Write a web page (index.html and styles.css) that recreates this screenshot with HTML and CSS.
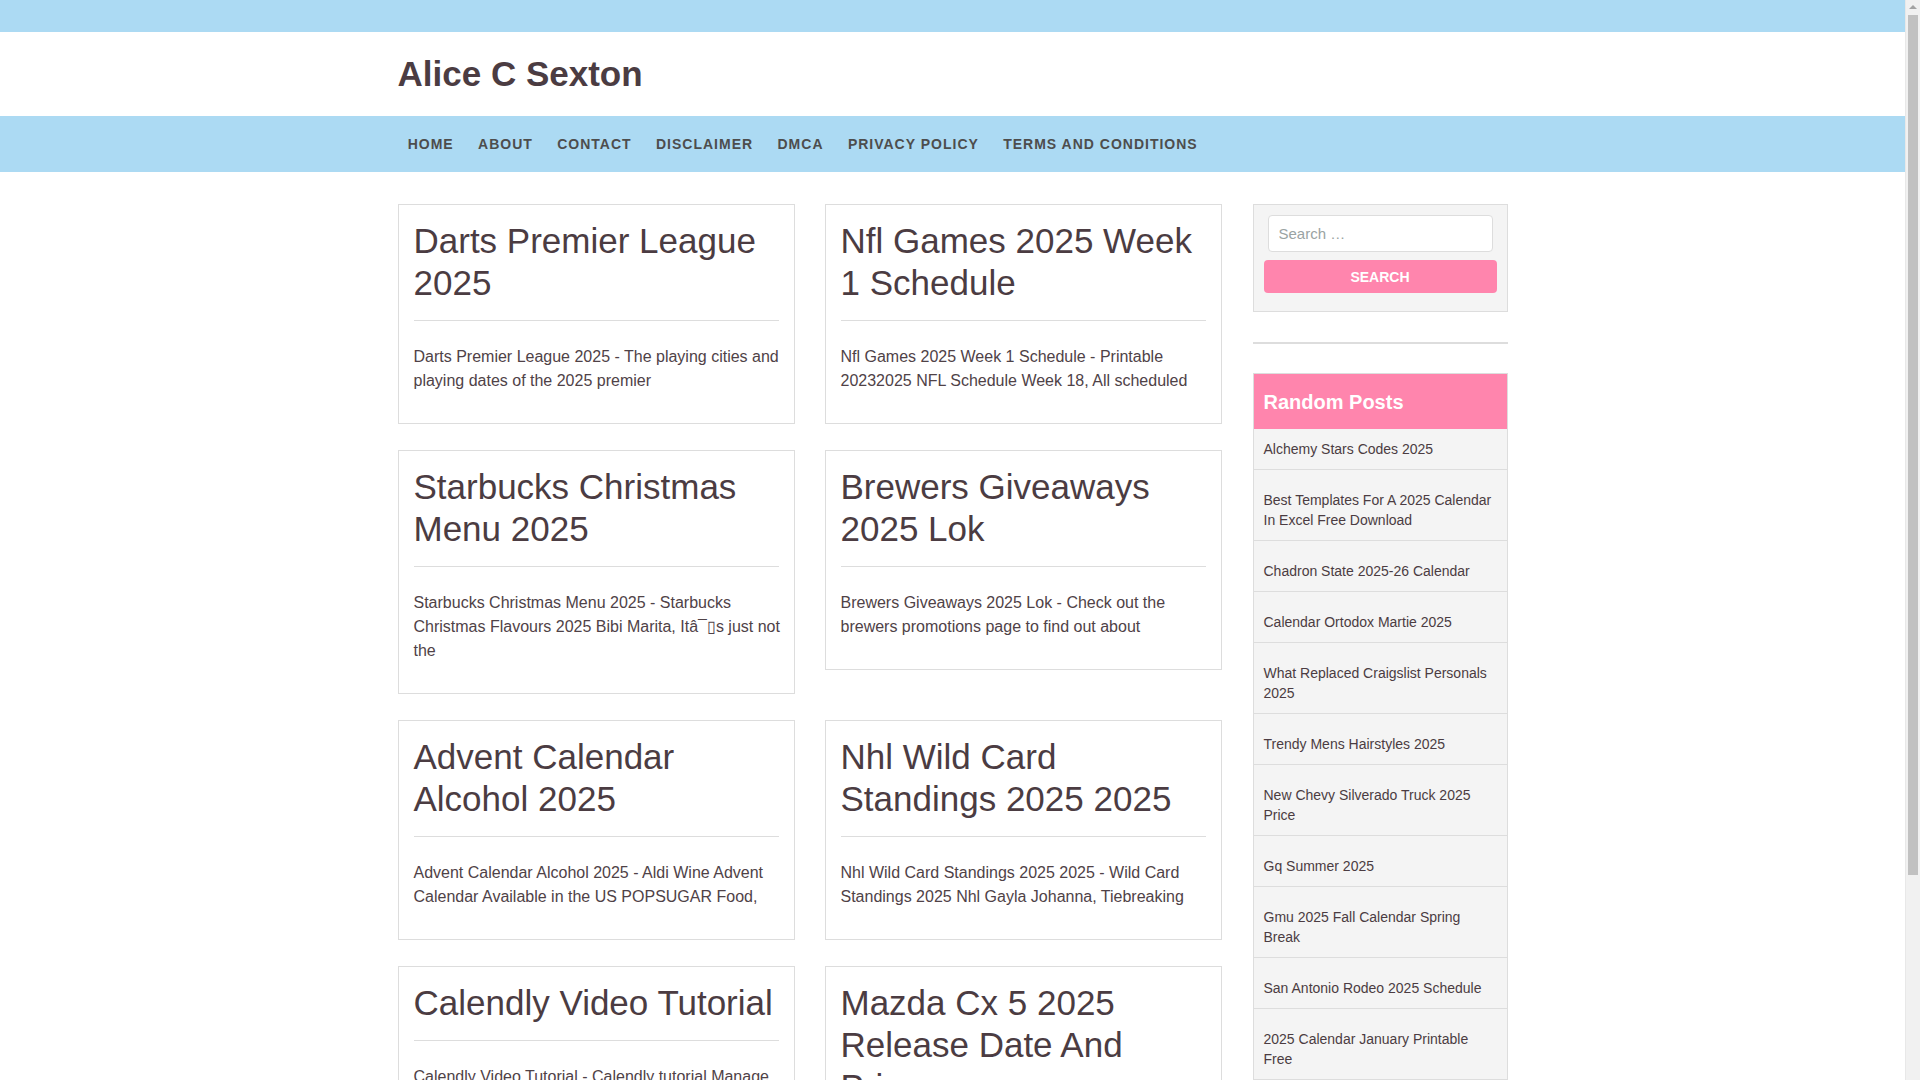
FILE: index.html
```html
<!DOCTYPE html>
<html lang="en">
<head>
<meta charset="utf-8">
<title>Alice C Sexton</title>
<link rel="stylesheet" href="styles.css">
</head>
<body>
<div class="topbar"></div>
<header class="site-header">
  <div class="container">
    <h1 class="site-title">Alice C Sexton</h1>
  </div>
</header>
<nav class="main-nav">
  <div class="container">
    <ul class="menu">
      <li><a href="#">Home</a></li>
      <li><a href="#">About</a></li>
      <li><a href="#">Contact</a></li>
      <li><a href="#">Disclaimer</a></li>
      <li><a href="#">DMCA</a></li>
      <li><a href="#">Privacy Policy</a></li>
      <li><a href="#">Terms and Conditions</a></li>
    </ul>
  </div>
</nav>

<div class="container content">
  <main class="posts">
    <article class="card">
      <header class="card-head"><h2 class="card-title">Darts Premier League 2025</h2></header>
      <p class="card-text">Darts Premier League 2025 - The playing cities and playing dates of the 2025 premier</p>
    </article>
    <article class="card">
      <header class="card-head"><h2 class="card-title">Nfl Games 2025 Week 1 Schedule</h2></header>
      <p class="card-text">Nfl Games 2025 Week 1 Schedule - Printable 20232025 NFL Schedule Week 18, All scheduled</p>
    </article>
    <article class="card">
      <header class="card-head"><h2 class="card-title">Starbucks Christmas Menu 2025</h2></header>
      <p class="card-text">Starbucks Christmas Menu 2025 - Starbucks Christmas Flavours 2025 Bibi Marita, Itâ¯▯s just not the</p>
    </article>
    <article class="card">
      <header class="card-head"><h2 class="card-title">Brewers Giveaways 2025 Lok</h2></header>
      <p class="card-text">Brewers Giveaways 2025 Lok - Check out the brewers promotions page to find out about</p>
    </article>
    <article class="card">
      <header class="card-head"><h2 class="card-title">Advent Calendar Alcohol 2025</h2></header>
      <p class="card-text">Advent Calendar Alcohol 2025 - Aldi Wine Advent Calendar Available in the US POPSUGAR Food,</p>
    </article>
    <article class="card">
      <header class="card-head"><h2 class="card-title">Nhl Wild Card Standings 2025 2025</h2></header>
      <p class="card-text">Nhl Wild Card Standings 2025 2025 - Wild Card Standings 2025 Nhl Gayla Johanna, Tiebreaking</p>
    </article>
    <article class="card">
      <header class="card-head"><h2 class="card-title">Calendly Video Tutorial</h2></header>
      <p class="card-text">Calendly Video Tutorial - Calendly tutorial Manage your meetings and scheduling with ease</p>
    </article>
    <article class="card">
      <header class="card-head"><h2 class="card-title">Mazda Cx 5 2025 Release Date And Price</h2></header>
      <p class="card-text">Mazda Cx 5 2025 Release Date And Price - The new model brings updated styling and</p>
    </article>
  </main>

  <aside class="sidebar">
    <section class="widget search-widget">
      <form class="search-form">
        <input class="search-field" type="search" placeholder="Search …">
        <button class="search-submit" type="button">SEARCH</button>
      </form>
    </section>
    <div class="sidebar-sep"></div>
    <section class="widget random-posts">
      <h3 class="widget-title">Random Posts</h3>
      <ul class="post-list">
        <li><a href="#">Alchemy Stars Codes 2025</a></li>
        <li><a href="#">Best Templates For A 2025 Calendar In Excel Free Download</a></li>
        <li><a href="#">Chadron State 2025-26 Calendar</a></li>
        <li><a href="#">Calendar Ortodox Martie 2025</a></li>
        <li><a href="#">What Replaced Craigslist Personals 2025</a></li>
        <li><a href="#">Trendy Mens Hairstyles 2025</a></li>
        <li><a href="#">New Chevy Silverado Truck 2025 Price</a></li>
        <li><a href="#">Gq Summer 2025</a></li>
        <li><a href="#">Gmu 2025 Fall Calendar Spring Break</a></li>
        <li><a href="#">San Antonio Rodeo 2025 Schedule</a></li>
        <li><a href="#">2025 Calendar January Printable Free</a></li>
      </ul>
    </section>
  </aside>
</div>

<div class="scrollbar" aria-hidden="true">
  <div class="scroll-arrow scroll-up"></div>
  <div class="scroll-thumb"></div>
</div>
</body>
</html>
```

FILE: styles.css
```css
* {
  box-sizing: border-box;
}

html, body {
  margin: 0;
  padding: 0;
}

body {
  margin-right: 15px;
  font-family: "Liberation Sans", Arial, sans-serif;
  color: #4b3c42;
  background: #ffffff;
  font-size: 16px;
  line-height: 1.5;
}

a {
  color: inherit;
  text-decoration: none;
}

.container {
  width: 1110px;
  margin: 0 auto;
}

.topbar {
  height: 32px;
  background: #acdaf3;
}

.site-header {
  height: 84px;
  background: #ffffff;
}

.site-header .container {
  height: 100%;
  display: flex;
  align-items: center;
}

.site-title {
  margin: 0;
  font-size: 35px;
  line-height: 42px;
  font-weight: bold;
  color: #4b3c42;
}

.main-nav {
  height: 56px;
  background: #acdaf3;
}

.menu {
  list-style: none;
  margin: 0 0 0 -2px;
  padding: 0;
  height: 56px;
  display: flex;
  align-items: center;
}

.menu a {
  display: block;
  padding: 0 12.2px;
  font-size: 14px;
  font-weight: bold;
  letter-spacing: 1px;
  text-transform: uppercase;
  color: #4d4d4d;
  line-height: 56px;
}

.content {
  margin-top: 32px;
  display: grid;
  grid-template-columns: 824px 255px;
  column-gap: 31px;
  align-items: start;
}

.posts {
  display: grid;
  grid-template-columns: 397px 397px;
  column-gap: 30px;
  row-gap: 26px;
  align-items: start;
}

.card {
  border: 1px solid #dddddd;
  padding: 15px 13px 0 15px;
  background: #ffffff;
}

.card-head {
  padding-bottom: 16px;
  border-bottom: 1px solid #dddddd;
  margin-right: 2px;
}

.card-title {
  margin: 0;
  font-size: 35px;
  line-height: 42px;
  font-weight: normal;
  color: #4b3c42;
}

.card-text {
  margin: 24px 0 30px;
  font-size: 16px;
  line-height: 24px;
  color: #4f4247;
}

.search-widget {
  background: #f4f4f4;
  border: 1px solid #dddddd;
  padding: 10px;
}

.search-form {
  margin: 0;
}

.search-field {
  display: block;
  width: calc(100% - 8px);
  margin: 0 4px;
  height: 37px;
  border: 1px solid #dddddd;
  border-radius: 4px;
  background: #ffffff;
  padding: 0 10px;
  font-family: "Liberation Sans", Arial, sans-serif;
  font-size: 15px;
  color: #555555;
  outline: none;
}

.search-field::placeholder {
  color: #9aa3a3;
}

.search-submit {
  display: block;
  width: 100%;
  height: 33px;
  margin: 8px 0;
  border: none;
  border-radius: 4px;
  background: #ff85ad;
  color: #ffffff;
  font-family: "Liberation Sans", Arial, sans-serif;
  font-size: 14px;
  font-weight: bold;
  padding: 0;
}

.sidebar-sep {
  height: 2px;
  background: #dddddd;
  margin: 30px 0 29px;
}

.random-posts {
  border: 1px solid #dddddd;
  border-bottom: none;
}

.widget-title {
  margin: 0;
  background: #ff85ad;
  color: #ffffff;
  font-size: 20px;
  line-height: 24px;
  font-weight: bold;
  padding: 16px 10px 15px;
}

.post-list {
  list-style: none;
  margin: 0;
  padding: 0;
}

.post-list li {
  background: #f4f4f4;
  border-bottom: 1px solid #dddddd;
  padding: 20px 10px 10px;
  font-size: 14px;
  line-height: 20px;
  color: #4b3c42;
}

.post-list li:first-child {
  padding-top: 10px;
}

/* classic scrollbar look, drawn over the right edge */
.scrollbar {
  position: fixed;
  top: 0;
  right: 0;
  width: 15px;
  height: 100vh;
  background: #f1f1f1;
  border-left: 1px solid #e8e8e8;
}

.scroll-arrow {
  position: absolute;
  left: 3px;
  top: 5px;
  width: 0;
  height: 0;
  border-left: 4px solid transparent;
  border-right: 4px solid transparent;
  border-bottom: 4px solid #a3a3a3;
}

.scroll-thumb {
  position: absolute;
  top: 15px;
  left: 2px;
  width: 10px;
  height: 860px;
  background: #c1c1c1;
}
```
